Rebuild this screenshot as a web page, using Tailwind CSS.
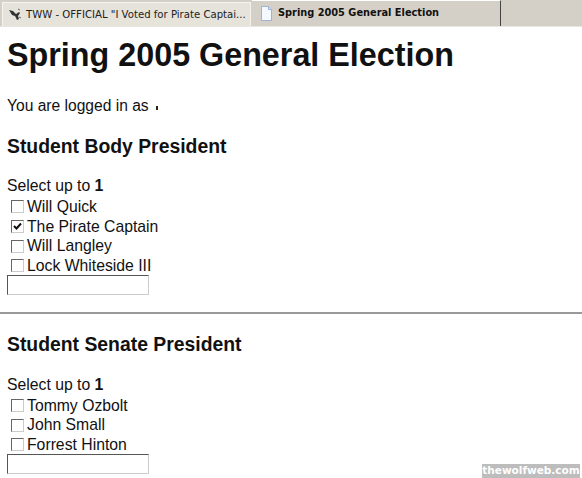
<!doctype html>
<html>
  <head>
    <meta charset="UTF-8" />
    <script src="https://cdn.jsdelivr.net/npm/@tailwindcss/browser@4"></script>
  </head>
  <body class="relative h-[478px] w-[582px] overflow-hidden bg-white font-['Liberation_Sans',sans-serif] text-[#111]">
    <!-- tab strip -->
    <div class="flex h-[27px] items-end gap-px border-b border-[#e8e6e0] bg-[#d4d0c8] pl-[2px]">
      <div class="flex h-[24px] w-[249px] items-center gap-[4px] border border-b-0 border-[#f4f3ee] bg-[#e6e3db] pl-[5px] font-['DejaVu_Sans',sans-serif] text-[10.15px] whitespace-nowrap text-[#222]">
        <svg class="h-[14px] w-[14px] shrink-0" viewBox="0 0 14 14"><path d="M1 2l4 1 3 3 3-2 1 1-2 3 1 3-2 1-2-4-3-1z" fill="#333"/><path d="M10 1l2 1M11 9l2 1" stroke="#667" fill="none"/></svg>
        <span>TWW - OFFICIAL "I Voted for Pirate Captai...</span>
      </div>
      <div class="flex h-[26px] w-[249px] items-center gap-[5px] border-t border-r border-t-white border-r-[#444] bg-[#d4d0c8] pl-[8px] font-['DejaVu_Sans',sans-serif] text-[9.8px] font-bold whitespace-nowrap text-[#111]">
        <svg class="h-[15px] w-[13px] shrink-0" viewBox="0 0 13 15"><path d="M1.500.5h7l3 3v11h-10z" fill="#f4f8ff" stroke="#9db2d6"/><path d="M8.500.5v3h3" fill="#d5e0f2" stroke="#9db2d6"/></svg>
        <span>Spring 2005 General Election</span>
      </div>
    </div>

    <main class="pl-[7px]">
      <h1 class="mt-[10px] text-[32.3px] leading-[36px] font-bold">Spring 2005 General Election</h1>
      <p class="mt-[24px] flex items-center text-[15.6px] leading-[18px]">You are logged in as<span class="mt-[3px] ml-[7px] h-[4px] w-[2px] bg-[#222]"></span></p>

      <h2 class="mt-[20px] text-[19.36px] leading-[22px] font-bold">Student Body President</h2>
      <p class="mt-[20px] text-[15.75px] leading-[18px]">Select up to <b>1</b></p>
      <ul class="mt-[2px] text-[15.75px] leading-[19.67px]">
        <li class="flex items-center gap-[3px] pl-[4px]"><span class="h-[13px] w-[13px] border border-[#666] border-r-[#ccc] border-b-[#ccc] bg-white"></span>Will Quick</li>
        <li class="flex items-center gap-[3px] pl-[4px]">
          <span class="h-[13px] w-[13px] border border-[#666] border-r-[#ccc] border-b-[#ccc] bg-white">
            <svg class="h-[11px] w-[11px]" viewBox="0 0 11 11"><path d="M2 5l2.500 2.500L9 2.500" fill="none" stroke="#111" stroke-width="2"/></svg>
          </span>The Pirate Captain
        </li>
        <li class="flex items-center gap-[3px] pl-[4px]"><span class="h-[13px] w-[13px] border border-[#666] border-r-[#ccc] border-b-[#ccc] bg-white"></span>Will Langley</li>
        <li class="flex items-center gap-[3px] pl-[4px]"><span class="h-[13px] w-[13px] border border-[#666] border-r-[#ccc] border-b-[#ccc] bg-white"></span>Lock Whiteside III</li>
      </ul>
      <input type="text" class="-mt-px block h-[20px] w-[142px] border border-[#555] border-r-[#ccc] border-b-[#ccc] bg-white" />
    </main>

    <hr class="mt-[17px] h-[2px] border-0 bg-[#999]" />

    <section class="pl-[7px]">
      <h2 class="mt-[19px] text-[19.36px] leading-[22px] font-bold">Student Senate President</h2>
      <p class="mt-[21px] text-[15.75px] leading-[18px]">Select up to <b>1</b></p>
      <ul class="mt-[2px] text-[15.75px] leading-[19.67px]">
        <li class="flex items-center gap-[3px] pl-[4px]"><span class="h-[13px] w-[13px] border border-[#666] border-r-[#ccc] border-b-[#ccc] bg-white"></span>Tommy Ozbolt</li>
        <li class="flex items-center gap-[3px] pl-[4px]"><span class="h-[13px] w-[13px] border border-[#666] border-r-[#ccc] border-b-[#ccc] bg-white"></span>John Small</li>
        <li class="flex items-center gap-[3px] pl-[4px]"><span class="h-[13px] w-[13px] border border-[#666] border-r-[#ccc] border-b-[#ccc] bg-white"></span>Forrest Hinton</li>
      </ul>
      <input type="text" class="-mt-px block h-[20px] w-[142px] border border-[#555] border-r-[#ccc] border-b-[#ccc] bg-white" />
    </section>

    <!-- watermark -->
    <div class="absolute right-[2px] bottom-0 flex h-[14px] w-[98px] items-center justify-center bg-[#bdbdbd] font-['DejaVu_Sans',sans-serif] text-[10.5px] font-bold text-white">thewolfweb.com</div>
  </body>
</html>
